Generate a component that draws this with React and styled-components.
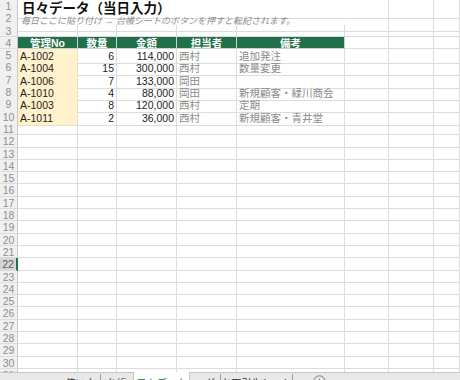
import React from "react";
import styled, { createGlobalStyle, css } from "styled-components";

const GlobalStyle = createGlobalStyle`
  html, body { margin: 0; padding: 0; background: #ffffff; }
  body { width: 460px; height: 380px; overflow: hidden; font-family: "Liberation Sans", "Noto Sans CJK JP", sans-serif; }
`;

const COLS = "18px 60px 39px 60px 60px 108px 44px 45px 1fr";
const ROW_H = 12.3;

const Page = styled.div`
  width: 460px;
  height: 380px;
  display: flex;
  flex-direction: column;
  overflow: hidden;
`;

const SheetArea = styled.div`
  height: 372px;
  flex: none;
  overflow: hidden;
`;

const Row = styled.div`
  display: grid;
  grid-template-columns: ${COLS};
  height: ${ROW_H}px;
`;

const RowHead = styled.div`
  box-sizing: border-box;
  background: ${(p) => (p.$selected ? "#d4d4d4" : "#f0f0f0")};
  color: ${(p) => (p.$selected ? "#5f5f5f" : "#8e8e8e")};
  border-right: ${(p) => (p.$selected ? "2px solid #217346" : "1px solid #c9c9c9")};
  border-bottom: 1px solid #dddddd;
  font-size: 10.5px;
  line-height: 13.5px;
  text-align: center;
  overflow: hidden;
`;

const Cell = styled.div`
  box-sizing: border-box;
  grid-column: span ${(p) => p.$span || 1};
  border-right: 1px solid ${(p) => p.$line || "#dcdcdc"};
  border-bottom: 1px solid ${(p) => p.$line || "#dcdcdc"};
  background: ${(p) => p.$bg || "transparent"};
  color: ${(p) => p.$color || "#1e1e1e"};
  font-size: 10.5px;
  line-height: 14px;
  padding: 0 2px;
  white-space: nowrap;
  overflow: ${(p) => (p.$overflow ? "visible" : "hidden")};
  text-align: ${(p) => p.$align || "left"};
  ${(p) =>
    p.$head &&
    css`
      background: #22704a;
      color: #ffffff;
      font-weight: bold;
      text-align: center;
      line-height: 12px;
      border-right-color: #c7d3cc;
      border-bottom-color: #c7d3cc;
    `}
`;

const Title = styled(Cell)`
  font-size: 13.5px;
  font-weight: bold;
  color: #111111;
  padding-left: 4px;
  line-height: 18px;
  border-right-color: transparent;
  position: relative;
  z-index: 1;
`;

const Note = styled(Cell)`
  font-size: 9px;
  font-style: italic;
  color: #8c8c8c;
  padding-left: 3px;
  line-height: 19px;
  border-right-color: transparent;
  position: relative;
  z-index: 1;
`;

const TabBar = styled.div`
  flex: none;
  height: 22px;
  box-sizing: border-box;
  background: #e8e8e8;
  border-top: 1px solid #c6c6c6;
  display: flex;
  align-items: flex-start;
  padding-left: 61px;
`;

const Tab = styled.div`
  box-sizing: border-box;
  width: ${(p) => p.$w}px;
  height: 18px;
  padding-top: 1px;
  font-size: 10px;
  text-align: center;
  color: #333333;
  white-space: nowrap;
  border-right: 1px solid ${(p) => (p.$sep ? "#9c9c9c" : "transparent")};
  margin-top: 1px;
  ${(p) =>
    p.$active &&
    css`
      background: #ffffff;
      margin-top: -1px;
      padding-top: 3px;
      color: #1d5f3e;
      border-left: 1px solid #c6c6c6;
      border-right: 1px solid #c6c6c6;
    `}
`;

const AddButton = styled.div`
  margin-left: 20px;
  margin-top: 2px;
  width: 13px;
  height: 13px;
  color: #7a7a7a;
  display: flex;
`;

const data = [
  { id: "A-1002", qty: 6, amt: "114,000", person: "西村", note: "追加発注" },
  { id: "A-1004", qty: 15, amt: "300,000", person: "西村", note: "数量変更" },
  { id: "A-1006", qty: 7, amt: "133,000", person: "岡田", note: "" },
  { id: "A-1010", qty: 4, amt: "88,000", person: "岡田", note: "新規顧客・緑川商会" },
  { id: "A-1003", qty: 8, amt: "120,000", person: "西村", note: "定期" },
  { id: "A-1011", qty: 2, amt: "36,000", person: "西村", note: "新規顧客・青井堂" },
];

const EmptyCells = ({ n }) =>
  Array.from({ length: n }, (_, i) => <Cell key={i} />);

export default function App() {
  const rows = [];
  rows.push(
    <Row key={1}>
      <RowHead>1</RowHead>
      <Title $span={5} $overflow>日々データ（当日入力）</Title>
      <EmptyCells n={3} />
    </Row>
  );
  rows.push(
    <Row key={2}>
      <RowHead>2</RowHead>
      <Note $span={5} $overflow>毎日ここに貼り付け → 台帳シートのボタンを押すと転記されます。</Note>
      <EmptyCells n={3} />
    </Row>
  );
  rows.push(
    <Row key={3}>
      <RowHead>3</RowHead>
      <EmptyCells n={8} />
    </Row>
  );
  rows.push(
    <Row key={4}>
      <RowHead>4</RowHead>
      <Cell $head>管理No</Cell>
      <Cell $head>数量</Cell>
      <Cell $head>金額</Cell>
      <Cell $head>担当者</Cell>
      <Cell $head>備考</Cell>
      <EmptyCells n={3} />
    </Row>
  );
  data.forEach((d, i) => {
    rows.push(
      <Row key={5 + i}>
        <RowHead>{5 + i}</RowHead>
        <Cell $bg="#fff2cc" $line="#ece0bd">{d.id}</Cell>
        <Cell $align="right">{d.qty}</Cell>
        <Cell $align="right">{d.amt}</Cell>
        <Cell $color="#8a8a8a" $overflow>{d.person}</Cell>
        <Cell $color="#8a8a8a">{d.note}</Cell>
        <EmptyCells n={3} />
      </Row>
    );
  });
  for (let r = 11; r <= 31; r++) {
    rows.push(
      <Row key={r}>
        <RowHead $selected={r === 22}>{r}</RowHead>
        <EmptyCells n={8} />
      </Row>
    );
  }

  return (
    <Page>
      <GlobalStyle />
      <SheetArea>{rows}</SheetArea>
      <TabBar>
        <Tab $w={40} $sep>使い方</Tab>
        <Tab $w={32}>台帳</Tab>
        <Tab $w={57} $active>日々データ</Tab>
        <Tab $w={31} $sep>ログ</Tab>
        <Tab $w={72} $sep>お取引先シート</Tab>
        <AddButton>
          <svg viewBox="0 0 16 16" width="13" height="13" fill="none" stroke="currentColor" strokeWidth="1.2">
            <circle cx="8" cy="8" r="7" />
            <path d="M8 4.5v7M4.5 8h7" />
          </svg>
        </AddButton>
      </TabBar>
    </Page>
  );
}
